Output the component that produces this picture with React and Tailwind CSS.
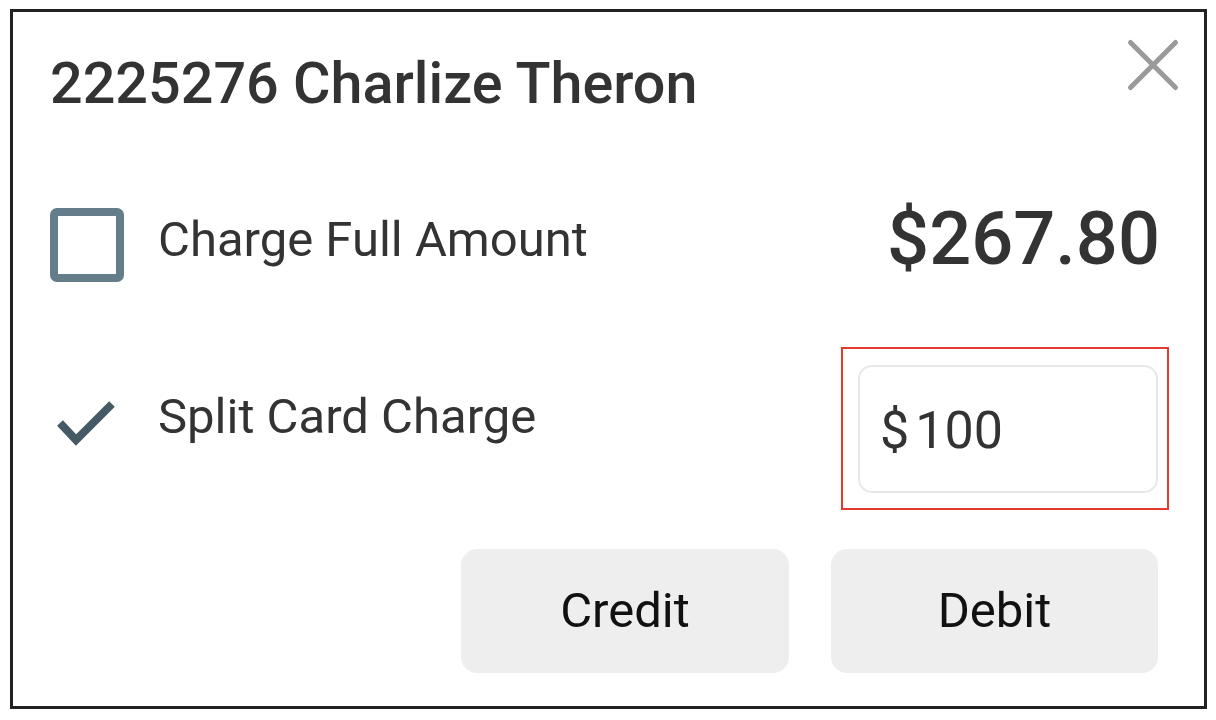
import React from "react";

const font = { fontFamily: "Roboto, 'Noto Sans', sans-serif" };

function CloseIcon() {
  return (
    <svg width="54" height="54" viewBox="0 0 54 54" fill="none">
      <path d="M4.5 4.5 L49.5 49.5 M49.5 4.5 L4.5 49.5" stroke="#9a9a9a" strokeWidth="5" strokeLinecap="round" />
    </svg>
  );
}

function CheckIcon() {
  return (
    <svg width="64" height="50" viewBox="0 0 64 50" fill="none">
      <polyline points="5,25 21,42 57,6" stroke="#455a64" strokeWidth="8" strokeLinejoin="miter" />
    </svg>
  );
}

export default function App() {
  return (
    <div className="min-h-screen bg-white pt-[9px] pl-[10px]" style={font}>
      <div className="relative w-[1197px] h-[700px] border-[3px] border-[#222] bg-white pl-[37px] pr-[44px]">
        <button className="absolute right-[24px] top-[26px]">
          <CloseIcon />
        </button>

        {/* title */}
        <h2 className="mt-[43px] text-[57.5px] leading-none font-medium text-[#333]">
          2225276 Charlize Theron
        </h2>

        {/* full amount */}
        <div className="mt-[89px] flex items-start justify-between">
          <div className="flex items-start">
            <div className="mt-[6px] w-[74px] h-[74px] rounded-[7px] border-[8px] border-[#647d8b]" />
            <span className="ml-[34px] mt-[13px] text-[49px] leading-none text-[#333]">Charge Full Amount</span>
          </div>
          <span className="text-[74px] leading-none font-medium text-[#333]">$267.80</span>
        </div>

        {/* split */}
        <div className="mt-[65px] flex items-start justify-between">
          <div className="flex items-start">
            <div className="ml-[5px] mt-[51px]">
              <CheckIcon />
            </div>
            <span className="ml-[39px] mt-[45px] text-[49px] leading-none text-[#333]">Split Card Charge</span>
          </div>
          <div className="mr-[-9px] border-2 border-[#e53a2f] pt-[16px] pl-[15px] pr-[9px] pb-[15px]">
            <div className="flex items-center w-[300px] h-[128px] rounded-[14px] border-2 border-[#e8e8e8] pl-[20px] pt-[4px] text-[52px] leading-none text-[#333]">
              <span className="mr-[6px]">$</span>
              <span>100</span>
            </div>
          </div>
        </div>

        {/* actions */}
        <div className="mt-[39px] mr-[2px] flex justify-end gap-[42px]">
          <button className="w-[328px] h-[124px] rounded-[16px] bg-[#eeeeee] text-[49px] text-[#111]">Credit</button>
          <button className="w-[327px] h-[124px] rounded-[16px] bg-[#eeeeee] text-[49px] text-[#111]">Debit</button>
        </div>
      </div>
    </div>
  );
}
